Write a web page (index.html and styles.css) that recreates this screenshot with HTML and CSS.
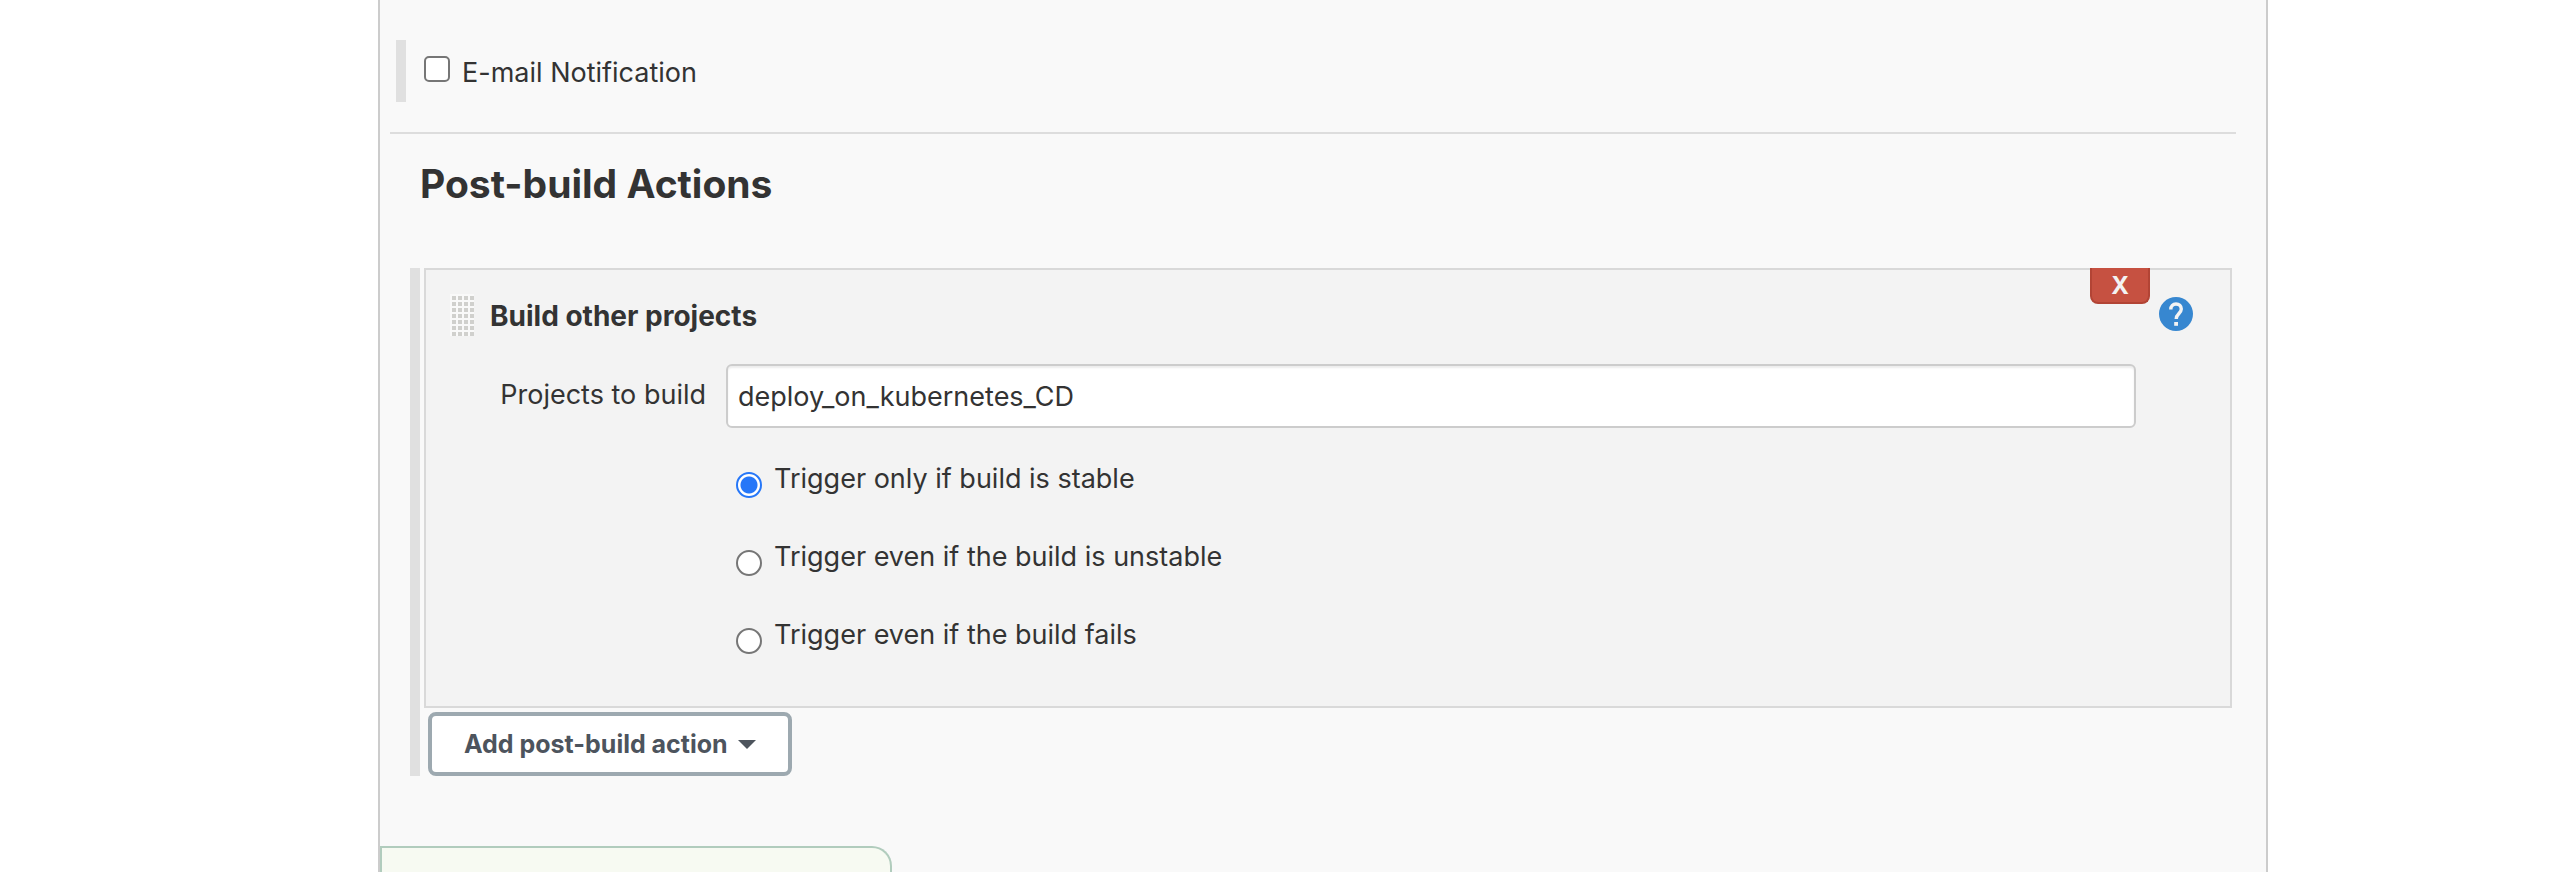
FILE: index.html
```
<!DOCTYPE html>
<html lang="en">
<head>
<meta charset="utf-8">
<title>Post-build Actions</title>
<link rel="stylesheet" href="styles.css">
</head>
<body>
<main class="panel">
  <form class="config">
    <div class="optional-block">
      <input class="checkbox" type="checkbox" id="email">
      <label class="email-label" for="email">E-mail Notification</label>
    </div>
    <hr class="divider">
    <h2 class="section-title">Post-build Actions</h2>
    <div class="repeatable">
      <section class="chunk">
        <div class="chunk-corner">
          <button class="delete" type="button">X</button>
          <a class="help" href="#" aria-label="Help">
            <svg viewBox="0 0 34 34" width="34" height="34" aria-hidden="true">
              <circle cx="17" cy="17" r="17" fill="#3787d0"/>
              <path d="M11.800 12.400C11.800 8.900 14 7 17 7s5.300 1.900 5.300 5.100c0 4.200-5.100 4.700-5.100 9.900" fill="none" stroke="#f3f3f3" stroke-width="3.400"/>
              <rect x="15.200" y="25" width="3.800" height="3.800" fill="#f3f3f3"/>
            </svg>
          </a>
        </div>
        <div class="chunk-head">
          <span class="handle"></span>
          <h3 class="chunk-title">Build other projects</h3>
        </div>
        <div class="fields">
          <label class="field-label" for="projects">Projects to build</label>
          <input class="text-input" type="text" id="projects" value="deploy_on_kubernetes_CD">
          <div class="radios">
            <label class="radio-row"><input class="radio" type="radio" name="threshold" checked><span>Trigger only if build is stable</span></label>
            <label class="radio-row"><input class="radio" type="radio" name="threshold"><span>Trigger even if the build is unstable</span></label>
            <label class="radio-row"><input class="radio" type="radio" name="threshold"><span>Trigger even if the build fails</span></label>
          </div>
        </div>
      </section>
      <button class="add" type="button">Add post-build action<span class="caret"></span></button>
    </div>
  </form>
  <div class="save-bar"></div>
</main>
</body>
</html>
```
FILE: styles.css
```
* { box-sizing: border-box; }

body {
  margin: 0;
  background: #fff;
  color: #333;
  font: 27px/42px Inter, "Liberation Sans", sans-serif;
}

.panel {
  display: flex;
  flex-direction: column;
  min-height: 100vh;
  margin: 0 296px 0 378px;
  border: solid #ccc;
  border-width: 0 2px;
  background: #f9f9f9;
}

.config { padding: 40px 30px 0 10px; }

.optional-block {
  display: flex;
  align-items: flex-start;
  gap: 12px;
  height: 62px;
  margin-left: 6px;
  padding: 12px 0 0 18px;
  border-left: 10px solid #e0e0e0;
}

.checkbox {
  appearance: none;
  width: 26px;
  height: 26px;
  margin: 4px 0 0;
  border: 2px solid #767676;
  border-radius: 5px;
  background: #fff;
}

.divider {
  height: 2px;
  margin: 30px 0 0;
  border: 0;
  background: #ddd;
}

.section-title {
  margin: 26px 0 0;
  padding-left: 30px;
  font-size: 39px;
  line-height: 48px;
  font-weight: 700;
}

.repeatable {
  margin: 60px 4px 0 20px;
  padding-left: 4px;
  border-left: 10px solid #e0e0e0;
}

.chunk {
  position: relative;
  padding: 24px 94px 50px 24px;
  border: 2px solid #d9d9d9;
  background: #f3f3f3;
}

.chunk-corner {
  position: absolute;
  top: -2px;
  right: 37px;
  display: flex;
  gap: 9px;
}

.delete {
  width: 60px;
  height: 36px;
  padding: 2px 0 0;
  border: 2px solid #b24435;
  border-top: 0;
  border-radius: 0 0 8px 8px;
  background: #c65141;
  color: #f3f3f3;
  font: 700 24px/32px Inter, sans-serif;
}

.help { display: block; height: 34px; margin-top: 29px; }
.help svg { display: block; }

.chunk-head { display: flex; align-items: center; gap: 16px; }

.handle {
  width: 24px;
  height: 42px;
  background-color: #f9f9f9;
  background-image: conic-gradient(from 0deg at 2px 2px, transparent 25%, #d0d0cd 0 50%, transparent 0);
  background-size: 6px 6px;
}

.chunk-title { margin: 0; padding-top: 2px; font-size: 28px; line-height: 40px; font-weight: 700; }

.fields {
  display: grid;
  grid-template-columns: 256px 1fr;
  column-gap: 20px;
  margin-top: 28px;
}

.field-label { padding-top: 10px; text-align: right; }

.text-input {
  width: 100%;
  height: 64px;
  padding: 0 10px;
  border: 2px solid #ccc;
  border-radius: 6px;
  background: #fff;
  box-shadow: inset 0 2px 2px #00000013;
  color: #333;
  font: inherit;
}

.radios { grid-column: 2; padding: 30px 0 0 10px; }

.radio-row { display: flex; gap: 12px; height: 78px; }

.radio {
  appearance: none;
  width: 26px;
  height: 26px;
  margin: 14px 0 0;
  border: 2px solid #767676;
  border-radius: 50%;
  background: #fff;
}

.radio:checked {
  border-color: #2677f8;
  background: radial-gradient(circle, #2677f8 8px, #fff 9px);
}

.radio-row:last-child { height: 42px; }

.add {
  display: flex;
  align-items: center;
  gap: 10px;
  height: 64px;
  margin: 4px 0 0 4px;
  padding: 0 32px;
  border: 4px solid #9da9b0;
  border-radius: 8px;
  background: #fff;
  color: #4d545d;
  font: 700 25px/32px Inter, sans-serif;
}

.caret {
  border: 9px solid transparent;
  border-top-color: currentColor;
  border-bottom: 0;
}

.save-bar {
  width: 512px;
  height: 26px;
  margin-top: auto;
  border: 2px solid #b1ccbd;
  border-bottom: 0;
  border-radius: 0 20px 0 0;
  background: #f7faf2;
}
```
